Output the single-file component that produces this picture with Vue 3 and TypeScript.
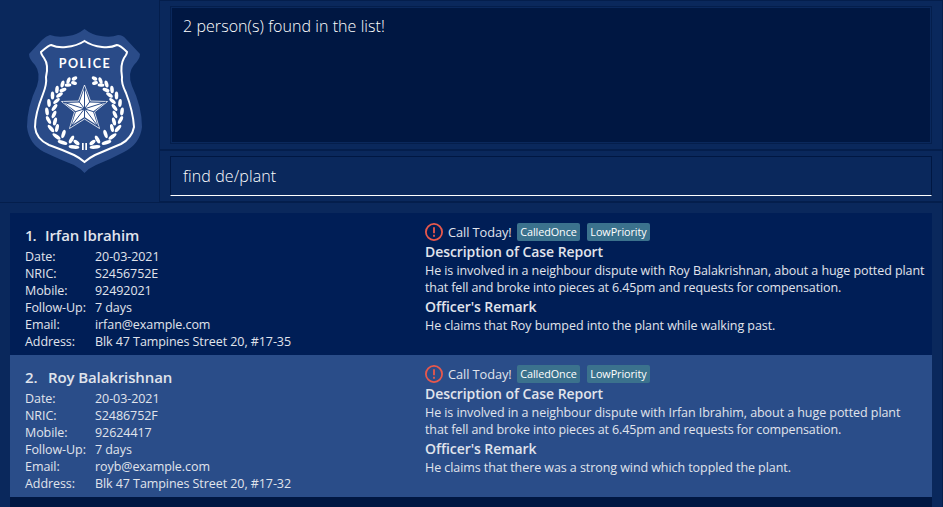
<script setup lang="ts">
interface Person {
  name: string
  fields: [string, string][]
  description: string[]
  remark: string
}

const people: Person[] = [
  {
    name: 'Irfan Ibrahim',
    fields: [
      ['Date:', '20-03-2021'],
      ['NRIC:', 'S2456752E'],
      ['Mobile:', '92492021'],
      ['Follow-Up:', '7 days'],
      ['Email:', 'irfan@example.com'],
      ['Address:', 'Blk 47 Tampines Street 20, #17-35'],
    ],
    description: [
      'He is involved in a neighbour dispute with Roy Balakrishnan, about a huge potted plant',
      'that fell and broke into pieces at 6.45pm and requests for compensation.',
    ],
    remark: 'He claims that Roy bumped into the plant while walking past.',
  },
  {
    name: 'Roy Balakrishnan',
    fields: [
      ['Date:', '20-03-2021'],
      ['NRIC:', 'S2486752F'],
      ['Mobile:', '92624417'],
      ['Follow-Up:', '7 days'],
      ['Email:', 'royb@example.com'],
      ['Address:', 'Blk 47 Tampines Street 20, #17-32'],
    ],
    description: [
      'He is involved in a neighbour dispute with Irfan Ibrahim, about a huge potted plant',
      'that fell and broke into pieces at 6.45pm and requests for compensation.',
    ],
    remark: 'He claims that there was a strong wind which toppled the plant.',
  },
]
const tags = ['CalledOnce', 'LowPriority']

// Leaves of the right-hand laurel branch: centre x, centre y, rotation, half length
const leaves: [number, number, number, number][] = [
  [79.5, 58.5, 25, 3], [80, 63, -15, 3],
  [85.5, 60.5, 70, 3.4], [86, 65, 5, 3.4],
  [91.5, 64, 75, 3.6], [91, 70, 20, 3.6],
  [97, 69.5, 85, 3.8], [94.5, 75, 35, 3.8],
  [101.5, 75.5, 90, 4], [97.5, 81, 42, 4],
  [105, 83, 95, 4], [99.5, 87.5, 52, 4],
  [107, 91.5, 98, 4], [100, 94.5, 65, 4],
  [105.5, 100, 118, 4.3], [99, 101.5, 75, 4.1],
  [103, 108.5, 130, 4.6], [97, 108, 78, 4.1],
  [97.5, 116.5, 143, 4.8], [90.5, 114, 72, 4.3],
  [91.5, 122.5, 163, 5], [82.5, 119.5, 60, 4.3],
  [80, 127, 175, 5.4], [77.5, 122.5, 140, 3.6],
]
</script>

<template>
  <main class="window">
    <header class="top">
      <div class="logo">
        <svg width="140" height="160" viewBox="0 0 140 160">
          <path class="shield" d="M69.500 9Q62 15 53 16Q43 18 35 15Q31 16 27 20L14 34Q14 39 20 45Q26 53 22 66Q12 87 12 107Q14 124 29 132Q46 140 59 145Q65 148 69.500 153Q74 148 81 145Q96 139 109 132Q125 124 127 107Q127 87 117 66Q112 53 119 45Q125 39 125 34L111 19Q108 15 103 15Q96 18 86 16Q77 15 69.500 9Z" />
          <path class="outline" d="M69.500 21Q62 26 51 27Q43 28 36 25Q34 25 26 32Q26 34 29 38Q34 45 31 57Q32 64 28 74Q20 94 20 107Q21 119 34 125Q48 130 59 135Q65 138 69.500 142Q74 138 80 135Q94 129 106 124Q117 118 119 107Q118 91 111 73Q106 63 107 57Q105 45 109 38Q112 34 112 32Q105 25 102 25Q96 28 87 27Q77 26 69.500 21Z" />
          <text class="police" x="69.250" y="47.500" text-anchor="middle" textLength="51">POLICE</text>
          <g v-for="side in ['right', 'left']" :key="side" :transform="side === 'left' ? 'translate(139 0) scale(-1 1)' : undefined">
            <ellipse
              v-for="(leaf, i) in leaves" :key="i" class="leaf"
              :cx="leaf[0]" :cy="leaf[1]" :rx="leaf[3]" ry="1.800"
              :transform="`rotate(${leaf[2]} ${leaf[0]} ${leaf[1]})`"
            />
            <path class="leaf" d="M70.300 123h1.700v7h-1.700z" />
          </g>
          <path class="star-line" d="M69.500 65L75.500 81L92.500 81.500L79.500 92L84.500 108.500L69.500 99L54.500 108.500L59.500 92L46.500 81.500L63.500 81Z" />
          <path class="star" d="M69.500 68L74.500 82.500L89.500 83L78 91.500L82.500 105.500L69.500 97L56.500 105.500L61 91.500L49.500 83L64.500 82.500Z" />
          <path class="facets" d="M69.500 67V98M48 82L78.500 91.700M55.500 107L74.600 82M83.500 107L64.400 82M91 82L60.500 91.700" />
        </svg>
      </div>
      <div class="panes">
        <section class="result-pane"><div class="result">2 person(s) found in the list!</div></section>
        <section class="command-pane"><div class="command">find de/plant</div></section>
      </div>
    </header>
    <div class="list">
      <article v-for="(p, n) in people" :key="p.name" class="card">
        <div class="details">
          <h2><span>{{ n + 1 }}.</span>{{ p.name }}</h2>
          <dl>
            <template v-for="f in p.fields" :key="f[0]"><dt>{{ f[0] }}</dt><dd>{{ f[1] }}</dd></template>
          </dl>
        </div>
        <div class="report">
          <div class="status">
            <svg width="18" height="18" viewBox="0 0 18 18"><circle cx="9" cy="9" r="8.100" /><path d="M9 4.200v6M9 11.800v2" /></svg>
            <span class="call">Call Today!</span>
            <span v-for="t in tags" :key="t" class="tag">{{ t }}</span>
          </div>
          <h3>Description of Case Report</h3>
          <p><span v-for="line in p.description" :key="line">{{ line }}</span></p>
          <h3>Officer's Remark</h3>
          <p><span>{{ p.remark }}</span></p>
        </div>
      </article>
    </div>
  </main>
</template>

<style>
body { background: #0a285c; }
</style>

<style scoped>
* { box-sizing: border-box; margin: 0; }
.window { height: 507px; overflow: hidden; background: #0a285c; color: #e0e4ec; font-family: "Open Sans", "Noto Sans", sans-serif; font-size: 12.500px; letter-spacing: -0.070px; border-right: 1px solid #041e4c; white-space: nowrap; display: flex; flex-direction: column; }
.top { height: 203px; display: flex; border-bottom: 1px solid #041e4c; }
.logo { width: 159px; padding: 20px 0 0 15px; }
.logo svg { display: block; }
.shield { fill: #2a4b88; }
.outline { fill: none; stroke: #fff; stroke-width: 2; }
.police { fill: #fff; font: 700 12.500px Lato, sans-serif; letter-spacing: 0; }
.leaf, .star { fill: #fff; }
.star-line { fill: #2a4b88; stroke: #fff; stroke-width: 0.800; }
.facets { fill: none; stroke: #2a4b88; stroke-width: 1; }
.panes { flex: 1; border-left: 1px solid #041e4c; border-top: 1px solid #041e4c; }
.result-pane { height: 150px; padding: 5px 10px 0; border-bottom: 2px solid #041e4c; }
.result { height: 138px; border: 1px solid #041e4c; box-shadow: inset 0 0 0 1px #0a285c; background: #001742; padding: 8px 12px; font-size: 16px; font-weight: 300; letter-spacing: 0.060px; line-height: 23px; color: #fff; }
.command-pane { height: 51px; padding: 5px 10px; border-bottom: 1px solid #041e4c; }
.command { height: 40px; border: 1px solid #001742; border-bottom-color: #fff; font-size: 16px; font-weight: 300; letter-spacing: 0.120px; line-height: 38px; padding-left: 12px; color: #fff; }
.list { margin: 10px 10px 0; flex: 1; background: #001742; }
.card { height: 142px; display: flex; background: #001e56; padding: 10px 0 0 15px; }
.card:nth-child(even) { background: #2a4d89; }
.details { width: 400px; flex-shrink: 0; padding-top: 1px; }
h2 { font-size: 15px; font-weight: 600; line-height: 22px; height: 24px; letter-spacing: -0.110px; }
h2 span { display: inline-block; width: 23px; }
.card:first-child h2 span { width: 20px; letter-spacing: -1px; }
dl { display: grid; grid-template-columns: 70px 1fr; grid-auto-rows: 17px; line-height: 17px; }
.status { display: flex; height: 18px; align-items: center; }
.status svg { fill: none; stroke: #e8584c; stroke-width: 1.800; }
.call { width: 69px; margin-left: 5px; font-size: 12.800px; }
.tag { width: 63px; height: 18px; text-align: center; line-height: 18px; font-size: 10.800px; border-radius: 2px; background: #3b728d; color: #fff; margin-right: 7px; }
h3 { font-size: 14px; font-weight: 600; line-height: 21px; height: 21px; letter-spacing: -0.070px; }
p span { display: block; height: 17px; line-height: 17px; }
p span:nth-child(2) { letter-spacing: -0.110px; }
</style>
